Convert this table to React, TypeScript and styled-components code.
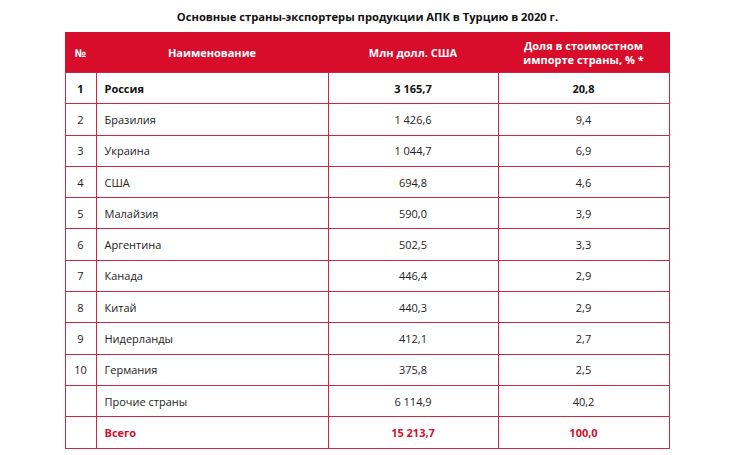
import React from "react";
import styled, { createGlobalStyle } from "styled-components";

const Global = createGlobalStyle`
  html, body { margin: 0; padding: 0; background: #ffffff; }
  body { font-family: "Open Sans", "Noto Sans", sans-serif; color: #1a1a1a; }
`;

const Page = styled.div`
  width: 735px;
  height: 455px;
  display: flex;
  flex-direction: column;
  align-items: center;
  padding-top: 10px;
  box-sizing: border-box;
`;

const Title = styled.h1`
  margin: 0 0 8px 0;
  font-size: 11.2px;
  font-weight: 700;
  line-height: 14px;
  color: #111;
  text-align: center;
`;

const Table = styled.table`
  border-collapse: collapse;
  width: 604px;
  table-layout: fixed;
  margin-left: -1px;
`;

const Col = styled.col<{ $w: number }>`
  width: ${(p) => p.$w}px;
`;

const HeadCell = styled.th`
  height: 39px;
  background: #d70d2b;
  color: #ffffff;
  font-size: 11px;
  font-weight: 700;
  line-height: 14px;
  text-align: center;
  padding: 0 4px;
  border: 1px solid #d70d2b;
  border-bottom-color: #c8283f;
`;

const Row = styled.tr`
  height: 31.3px;
`;

const Cell = styled.td<{ $align?: "left" | "center"; $bold?: boolean; $red?: boolean }>`
  border: 1px solid #c92a42;
  font-size: 11px;
  line-height: 13px;
  padding: 0 8px;
  text-align: ${(p) => p.$align ?? "center"};
  font-weight: ${(p) => (p.$bold ? 700 : 400)};
  color: ${(p) => (p.$red ? "#d0102d" : p.$bold ? "#111" : "#222")};
  &:first-child { padding: 0 2px; }
`;

type R = { n: string; name: string; v: string; s: string; kind?: "bold" | "total" };

const rows: R[] = [
  { n: "1", name: "Россия", v: "3 165,7", s: "20,8", kind: "bold" },
  { n: "2", name: "Бразилия", v: "1 426,6", s: "9,4" },
  { n: "3", name: "Украина", v: "1 044,7", s: "6,9" },
  { n: "4", name: "США", v: "694,8", s: "4,6" },
  { n: "5", name: "Малайзия", v: "590,0", s: "3,9" },
  { n: "6", name: "Аргентина", v: "502,5", s: "3,3" },
  { n: "7", name: "Канада", v: "446,4", s: "2,9" },
  { n: "8", name: "Китай", v: "440,3", s: "2,9" },
  { n: "9", name: "Нидерланды", v: "412,1", s: "2,7" },
  { n: "10", name: "Германия", v: "375,8", s: "2,5" },
  { n: "", name: "Прочие страны", v: "6 114,9", s: "40,2" },
  { n: "", name: "Всего", v: "15 213,7", s: "100,0", kind: "total" },
];

export default function App() {
  return (
    <Page>
      <Global />
      <Title>Основные страны-экспортеры продукции АПК в Турцию в 2020 г.</Title>
      <Table>
        <colgroup>
          <Col $w={31} />
          <Col $w={232} />
          <Col $w={170} />
          <Col $w={171} />
        </colgroup>
        <thead>
          <tr>
            <HeadCell>№</HeadCell>
            <HeadCell>Наименование</HeadCell>
            <HeadCell>Млн долл. США</HeadCell>
            <HeadCell>
              Доля в стоимостном
              <br />
              импорте страны, % *
            </HeadCell>
          </tr>
        </thead>
        <tbody>
          {rows.map((r, i) => {
            const bold = r.kind === "bold" || r.kind === "total";
            const red = r.kind === "total";
            return (
              <Row key={i}>
                <Cell $bold={r.kind === "bold"}>{r.n}</Cell>
                <Cell $align="left" $bold={bold} $red={red}>
                  {r.name}
                </Cell>
                <Cell $bold={bold} $red={red}>
                  {r.v}
                </Cell>
                <Cell $bold={bold} $red={red}>
                  {r.s}
                </Cell>
              </Row>
            );
          })}
        </tbody>
      </Table>
    </Page>
  );
}
